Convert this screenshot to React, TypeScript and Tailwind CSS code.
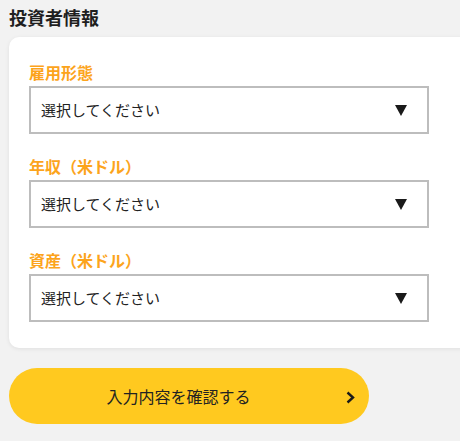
import React from "react";

const font = { fontFamily: '"Noto Sans CJK JP", "Noto Sans", sans-serif' };

function Field({ label }: { label: string }) {
  return (
    <div className="flex flex-col">
      <div className="h-6 text-[16px] leading-6 font-bold text-[#fca41c] mb-[2px]">{label}</div>
      <div className="w-[400px] h-[48px] border-2 border-[#bdbdbd] bg-white flex items-center pl-[10px] pr-[20px]">
        <span className="flex-1 text-[15px] text-[#222]">選択してください</span>
        <svg width="12" height="11" viewBox="0 0 12 11">
          <polygon points="0,0 12,0 6,11" fill="#1a1a1a" />
        </svg>
      </div>
    </div>
  );
}

export default function App() {
  return (
    <div className="w-[460px] h-[441px] overflow-hidden bg-[#f2f2f2] pl-[9px] pt-[4px]" style={font}>
      <div className="h-[27px] text-[18px] leading-[27px] font-bold text-[#1f1f1f]">投資者情報</div>
      <div className="mt-[6px] w-[480px] bg-white rounded-[10px] shadow-[0_1px_4px_rgba(0,0,0,0.08)] pl-[20px] pt-[23px] pb-[26px] flex flex-col gap-[20px]">
        <Field label="雇用形態" />
        <Field label="年収（米ドル）" />
        <Field label="資産（米ドル）" />
      </div>
      <button className="relative mt-[20px] w-[360px] h-[56px] rounded-full bg-[#ffc91f] flex items-center justify-center pr-[21px]">
        <span className="text-[16px] text-[#222]">入力内容を確認する</span>
        <svg className="absolute right-[14px] top-[23px]" width="9" height="13" viewBox="0 0 9 13">
          <polyline points="1.5,1.5 7,6.5 1.5,11.5" fill="none" stroke="#1a1a1a" strokeWidth="2.4" />
        </svg>
      </button>
    </div>
  );
}
